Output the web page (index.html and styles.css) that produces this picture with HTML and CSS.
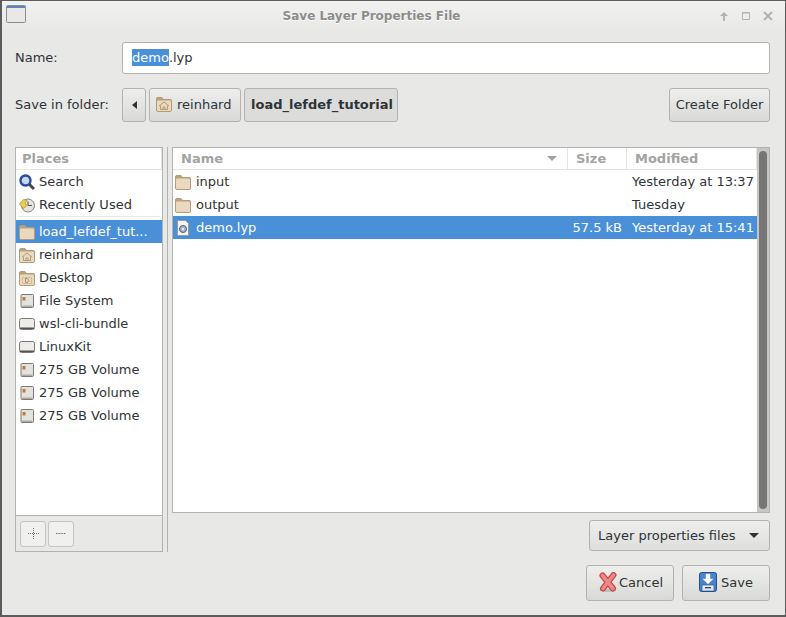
FILE: index.html
```html
<!DOCTYPE html>
<html lang="en">

<head>
    <meta charset="UTF-8">
    <title>Save Layer Properties File</title>
    <link rel="stylesheet" href="styles.css">
</head>

<body>
    <svg class="defs" width="0" height="0">
        <symbol id="folder" viewBox="0 0 16 16">
            <path d="M0.5 3V14Q0.5 15.5 2 15.5H14Q15.5 15.5 15.5 14V4.5Q15.5 3.5 14.5 3.5H7.5L6 1.5H1.5Q0.5 1.5 0.5 3Z" fill="#b9a27e" stroke="#b39c78"/>
            <path d="M1 5.5Q1 4.5 2 4.5H14Q15 4.5 15 5.5V14Q15 15 14 15H2Q1 15 1 14Z" fill="#ead9be"/>
        </symbol>
        <symbol id="folder-home" viewBox="0 0 16 16">
            <use href="#folder"/>
            <path d="M3 10L8 6L13 10M4.5 9.5V13.5H11.5V9.5M7 13.5V11H9V13.5" fill="none" stroke="#b39c78"/>
        </symbol>
        <symbol id="folder-desk" viewBox="0 0 16 16">
            <use href="#folder"/>
            <path d="M3.5 7.5H12.5V13.5H3.5Z" fill="none" stroke="#c7b08c" stroke-dasharray="2 1"/>
            <path d="M6.5 8.5H8.5L9.8 10.5L8.5 12.5H6.5Z" fill="none" stroke="#a8906c"/>
        </symbol>
        <symbol id="drive" viewBox="0 0 16 16">
            <rect x="2" y="1.5" width="12.5" height="13" rx="1" fill="#e4e2de" stroke="#7d7a74"/>
            <rect x="3" y="12.5" width="10.5" height="1.5" fill="#aeaba5"/>
            <rect x="3.5" y="4" width="3" height="3.5" fill="#c07a45"/>
        </symbol>
        <symbol id="disk" viewBox="0 0 16 16">
            <rect x="0.5" y="2.5" width="15" height="11" rx="2" fill="#eeece8" stroke="#7a7874"/>
            <rect x="1" y="11.5" width="14" height="1.5" fill="#55534f"/>
        </symbol>
    </svg>

    <div class="window">
        <header class="titlebar">
            <svg class="wm-icon" width="20" height="20" viewBox="0 0 20 20">
                <rect x="0.5" y="0.5" width="19" height="17" rx="1" fill="#e9e8e6" stroke="#8d8d8d"/>
                <rect x="1" y="1" width="18" height="2" fill="#5b84bb"/>
            </svg>
            <span class="title">Save Layer Properties File</span>
            <div class="wm-buttons">
                <svg width="10" height="10" viewBox="0 0 10 10"><path d="M5 10V4" stroke="#b3b3b3" stroke-width="2"/><path d="M1 5L5 1L9 5Z" fill="#b3b3b3"/></svg>
                <svg width="10" height="10" viewBox="0 0 10 10"><path d="M1.5 1.5H8.5V8.5H1.5Z" fill="none" stroke="#b3b3b3"/><path d="M1 2H9" stroke="#b3b3b3"/></svg>
                <svg width="10" height="10" viewBox="0 0 10 10"><path d="M1 1L9 9M9 1L1 9" stroke="#b3b3b3" stroke-width="2"/></svg>
            </div>
        </header>

        <div class="content">
            <div class="row name-row">
                <label class="field-label">Name:</label>
                <div class="entry"><span class="sel">demo</span>.lyp</div>
            </div>

            <div class="row folder-row">
                <label class="field-label">Save in folder:</label>
                <div class="path-bar">
                    <button class="btn path-back"><span class="arrow-left"></span></button>
                    <button class="btn path-item">
                        <svg class="icon"><use href="#folder-home"/></svg>
                        <span>reinhard</span>
                    </button>
                    <button class="btn path-item current">load_lefdef_tutorial</button>
                </div>
                <button class="btn create-folder">Create Folder</button>
            </div>

            <div class="browser">
                <aside class="places">
                    <div class="list-head places-head">Places</div>
                    <ul class="places-list">
                        <li>
                            <svg class="icon" viewBox="0 0 16 16">
                                <path d="M10.5 10.5L15 15" stroke="#4a4843" stroke-width="3"/>
                                <circle cx="6.5" cy="6.5" r="5" fill="#c6d7f0" stroke="#2a4b9b" stroke-width="2.4"/>
                            </svg>
                            Search
                        </li>
                        <li>
                            <svg class="icon" viewBox="0 0 16 16">
                                <circle cx="9" cy="8.5" r="6.5" fill="#e6e4de" stroke="#85837d"/>
                                <path d="M9 4.5V8.5H13" fill="none" stroke="#55534f"/>
                                <path d="M0.5 7L4.5 2.5L8 3.5L6 6L8 8.5L4.5 11.5Z" fill="#ecd04a" stroke="#a88d1e" stroke-width="0.7"/>
                            </svg>
                            Recently Used
                        </li>
                        <li class="list-sep"></li>
                        <li class="selected"><svg class="icon"><use href="#folder"/></svg><span class="ellipsis">load_lefdef_tut...</span></li>
                        <li><svg class="icon"><use href="#folder-home"/></svg>reinhard</li>
                        <li><svg class="icon"><use href="#folder-desk"/></svg>Desktop</li>
                        <li><svg class="icon"><use href="#drive"/></svg>File System</li>
                        <li><svg class="icon"><use href="#disk"/></svg>wsl-cli-bundle</li>
                        <li><svg class="icon"><use href="#disk"/></svg>LinuxKit</li>
                        <li><svg class="icon"><use href="#drive"/></svg>275 GB Volume</li>
                        <li><svg class="icon"><use href="#drive"/></svg>275 GB Volume</li>
                        <li><svg class="icon"><use href="#drive"/></svg>275 GB Volume</li>
                    </ul>
                    <div class="places-tools">
                        <button class="tool-btn">
                            <svg width="11" height="11" viewBox="0 0 11 11"><path d="M0 5.5H11M5.5 0V11" stroke="#6f6f6f" stroke-dasharray="1 1"/></svg>
                        </button>
                        <button class="tool-btn">
                            <svg width="11" height="11" viewBox="0 0 11 11"><path d="M0 5.5H10" stroke="#6f6f6f" stroke-dasharray="1 0.6"/></svg>
                        </button>
                    </div>
                </aside>

                <div class="splitter"></div>

                <div class="files-col">
                    <div class="files">
                        <div class="files-main">
                            <div class="files-head">
                                <div class="list-head col-name">Name<span class="sort-arrow"></span></div>
                                <div class="list-head col-size">Size</div>
                                <div class="list-head col-mod">Modified</div>
                            </div>
                            <div class="file-row">
                                <div class="col-name"><svg class="icon"><use href="#folder"/></svg>input</div>
                                <div class="col-size"></div>
                                <div class="col-mod">Yesterday at 13:37</div>
                            </div>
                            <div class="file-row">
                                <div class="col-name"><svg class="icon"><use href="#folder"/></svg>output</div>
                                <div class="col-size"></div>
                                <div class="col-mod">Tuesday</div>
                            </div>
                            <div class="file-row selected">
                                <div class="col-name">
                                    <svg class="icon" viewBox="0 0 16 16">
                                        <path d="M2.5 0.5H10.5L13.5 3.5V15.5H2.5Z" fill="#f4f4f2" stroke="#9a9a9a"/>
                                        <circle cx="8" cy="9" r="3.5" fill="#a9b8cf" stroke="#4a5a75"/>
                                        <circle cx="8" cy="9" r="1" fill="#fff"/>
                                    </svg>
                                    demo.lyp
                                </div>
                                <div class="col-size">57.5 kB</div>
                                <div class="col-mod">Yesterday at 15:41</div>
                            </div>
                        </div>
                        <div class="scrollbar"><div class="thumb"></div></div>
                    </div>
                    <div class="filter-row">
                        <button class="btn filter">Layer properties files<span class="arrow-down"></span></button>
                    </div>
                </div>
            </div>

            <div class="actions">
                <button class="btn action cancel">
                    <svg class="icon-lg" viewBox="0 0 18 20">
                        <ellipse cx="9" cy="18.5" rx="8" ry="1.5" fill="#bdbdbb"/>
                        <path d="M3.5 3.5L14 16.5M14.5 3L4 16.5" stroke="#c64545" stroke-width="6" stroke-linecap="round"/>
                        <path d="M3.5 3.5L14 16.5M14.5 3L4 16.5" stroke="#ea8a88" stroke-width="3.6" stroke-linecap="round"/>
                    </svg>
                    Cancel
                </button>
                <button class="btn action save">
                    <svg class="icon-lg" viewBox="0 0 18 20">
                        <rect x="0.5" y="0.5" width="17" height="19" rx="2" fill="#4a82cc" stroke="#234f8c"/>
                        <rect x="3" y="13" width="12" height="6" fill="#dfe6ef" stroke="#234f8c" stroke-width="0.6"/>
                        <path d="M7 2H11V7H14L9 12L4 7H7Z" fill="#fff" stroke="#dbe5f2" stroke-width="0.5"/>
                        <rect x="6" y="15" width="6" height="1.4" fill="#4a4a4a"/>
                    </svg>
                    Save
                </button>
            </div>
        </div>
    </div>
</body>

</html>
```

FILE: styles.css
```css
html,
body {
    margin: 0;
    height: 100%;
    overflow: hidden;
}

body {
    font-family: "DejaVu Sans", sans-serif;
    font-size: 13px;
    color: #2e3436;
    background-color: #5a5a5a;
}

.defs {
    position: absolute;
}

button {
    font: inherit;
    color: inherit;
}

.window {
    box-sizing: border-box;
    width: 786px;
    height: 617px;
    border: 1px solid #5c5c5c;
    border-width: 1px 1px 2px 2px;
    border-top-right-radius: 5px;
    background-color: #e8e8e7;
    display: flex;
    flex-direction: column;
}

.titlebar {
    height: 31px;
    flex: none;
    display: flex;
    align-items: center;
    padding: 0 12px 2px 4px;
    box-sizing: border-box;
    background: linear-gradient(#f1f1f0, #e8e8e7);
}

.wm-icon {
    margin-top: -1px;
}

.title {
    flex: 1;
    text-align: center;
    font-size: 12px;
    font-weight: bold;
    color: #8c8c8c;
    text-shadow: 0 1px 0 #fff;
    padding-right: 2px;
}

.wm-buttons {
    display: flex;
    gap: 12px;
}

.content {
    flex: 1;
    display: flex;
    flex-direction: column;
    padding: 10px 15px 14px 13px;
}

.row {
    display: flex;
    align-items: center;
}

.field-label {
    width: 107px;
    flex: none;
    padding-bottom: 2px;
}

.entry {
    flex: 1;
    box-sizing: border-box;
    height: 32px;
    line-height: 30px;
    padding-left: 9px;
    font-size: 13px;
    color: #2e3436;
    background-color: #fff;
    border: 1px solid #b2b2af;
    border-radius: 3px;
}

.sel {
    display: inline-block;
    line-height: 17px;
    color: #fff;
    background-color: #4a90d9;
}

.folder-row {
    margin-top: 14px;
}

.btn {
    box-sizing: border-box;
    height: 34px;
    padding: 0 8px 2px;
    border: 1px solid #b2b2af;
    border-radius: 3px;
    background: linear-gradient(#eeeeed, #d9d9d7);
    display: inline-flex;
    align-items: center;
}

.path-bar {
    flex: 1;
    display: flex;
    gap: 3px;
}

.path-back {
    width: 24px;
    justify-content: center;
    padding: 0;
}

.arrow-left {
    border: 4px solid transparent;
    border-left: 0;
    border-right: 5px solid #2e3436;
}

.path-item {
    width: 92px;
    padding-left: 6px;
    gap: 5px;
    white-space: nowrap;
}

.path-item.current {
    width: 154px;
    font-weight: bold;
    background: #dcdcda;
}

.create-folder {
    width: 101px;
    justify-content: center;
    padding: 0 0 2px;
}

.browser {
    flex: 1;
    display: flex;
    margin-top: 25px;
    min-height: 0;
}

.places {
    box-sizing: border-box;
    width: 148px;
    height: 405px;
    flex: none;
    display: flex;
    flex-direction: column;
    background-color: #fff;
    border: 1px solid #b2b2af;
}

.list-head {
    box-sizing: border-box;
    height: 22px;
    line-height: 21px;
    font-weight: bold;
    color: #a3a3a1;
    border-bottom: 1px solid #e4e4e2;
    border-right: 1px solid #e4e4e2;
    padding-left: 6px;
}

.places-list {
    flex: 1;
    list-style: none;
    margin: 0;
    padding: 0;
}

.places-list li {
    height: 23px;
    display: flex;
    align-items: center;
    gap: 4px;
    padding-left: 3px;
}

.places-list .list-sep {
    height: 4px;
    padding: 0;
    margin: 0 2px;
    background: linear-gradient(#e8e8e7 1px, #fff 1px);
}

.selected {
    color: #fff;
    background-color: #4a90d9;
}

.ellipsis {
    white-space: nowrap;
}

.icon {
    width: 16px;
    height: 16px;
    flex: none;
}

.icon-lg {
    width: 18px;
    height: 20px;
    flex: none;
}

.places-tools {
    height: 35px;
    flex: none;
    display: flex;
    align-items: center;
    gap: 2px;
    padding-left: 4px;
    background-color: #e8e8e7;
    border-top: 1px solid #b2b2af;
}

.tool-btn {
    box-sizing: border-box;
    width: 26px;
    height: 26px;
    padding: 0;
    display: flex;
    align-items: center;
    justify-content: center;
    border: 1px solid #c4c4c2;
    border-radius: 3px;
    background-color: #f0f0ef;
}

.splitter {
    width: 1px;
    height: 405px;
    flex: none;
    margin: 0 4px;
    background-color: #b2b2af;
}

.files-col {
    flex: 1;
    display: flex;
    flex-direction: column;
    min-width: 0;
}

.files {
    box-sizing: border-box;
    height: 366px;
    flex: none;
    display: flex;
    background-color: #fff;
    border: 1px solid #b2b2af;
}

.files-main {
    flex: 1;
    min-width: 0;
}

.files-head,
.file-row {
    display: flex;
}

.file-row {
    height: 23px;
    align-items: center;
}

.col-name {
    flex: 1;
    min-width: 0;
    display: flex;
    align-items: center;
    position: relative;
    gap: 5px;
    padding-left: 2px;
}

.list-head.col-name {
    padding-left: 8px;
}

.file-row .col-name {
    box-sizing: border-box;
}

.col-size {
    width: 59px;
    flex: none;
    box-sizing: border-box;
    text-align: right;
    padding-right: 5px;
}

.list-head.col-size {
    text-align: left;
    padding: 0 0 0 8px;
}

.col-mod {
    width: 130px;
    flex: none;
    box-sizing: border-box;
    padding-left: 5px;
}

.list-head.col-mod {
    padding-left: 8px;
}

.sort-arrow {
    position: absolute;
    right: 10px;
    top: 8px;
    border: 5px solid transparent;
    border-bottom: 0;
    border-top: 5px solid #a3a3a1;
}

.scrollbar {
    box-sizing: border-box;
    width: 12px;
    flex: none;
    padding: 3px 2px;
    background-color: #c6c6c4;
}

.thumb {
    height: 100%;
    border-radius: 4px;
    background-color: #767674;
}

.filter-row {
    display: flex;
    justify-content: flex-end;
    margin-top: 7px;
}

.filter {
    width: 181px;
    height: 31px;
    padding-bottom: 1px;
    justify-content: space-between;
    background: linear-gradient(#eeeeed, #dededc);
}

.arrow-down {
    margin-right: 2px;
    border: 5px solid transparent;
    border-bottom: 0;
    border-top: 5px solid #2e3436;
}

.actions {
    display: flex;
    justify-content: flex-end;
    gap: 8px;
}

.action {
    width: 88px;
    height: 36px;
    justify-content: center;
    padding: 0 0 2px;
}

.cancel {
    gap: 2px;
    padding-left: 2px;
}

.save {
    gap: 4px;
    padding-right: 0;
}
```
